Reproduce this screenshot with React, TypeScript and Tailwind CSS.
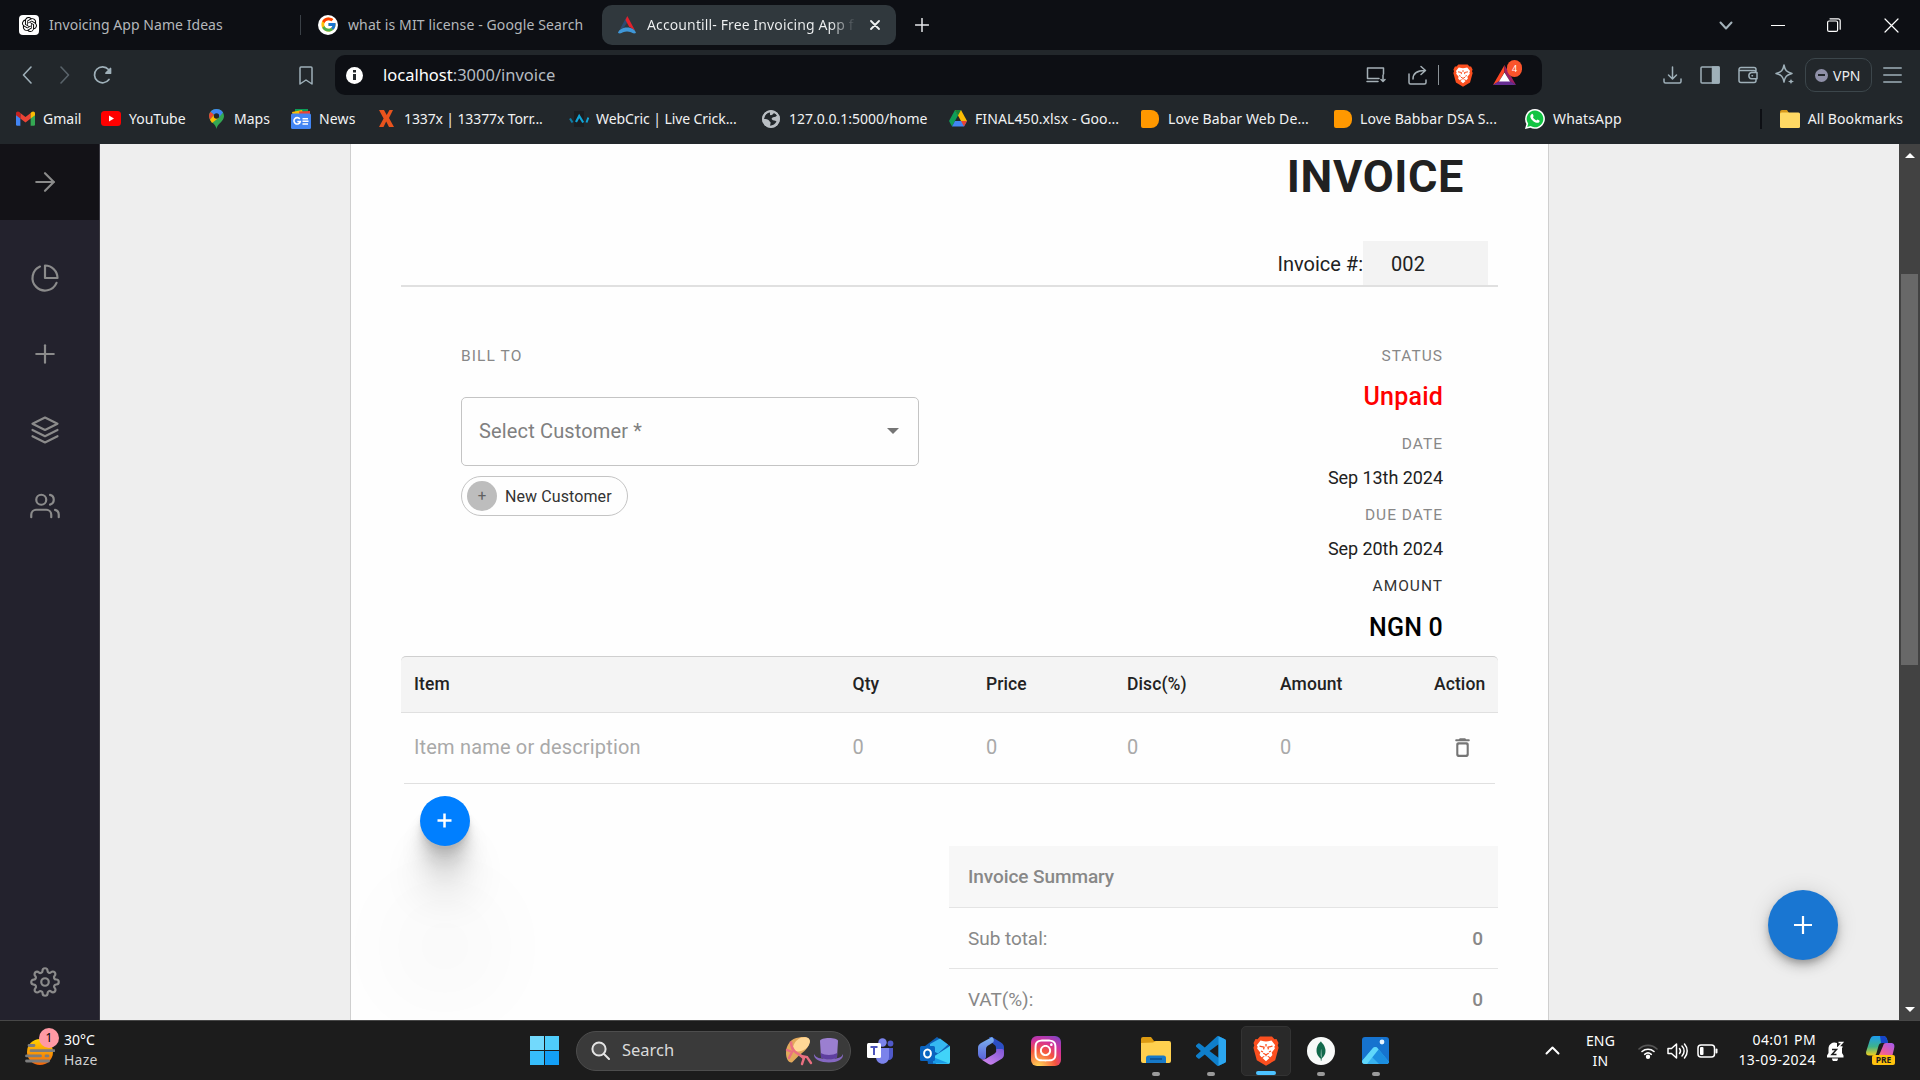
import React from "react";
import { FiArrowRight, FiLayers, FiPieChart, FiPlus, FiSettings, FiUsers } from "react-icons/fi";
import { FcGoogle } from "react-icons/fc";
import { SiMongodb, SiOpenai } from "react-icons/si";
import { FaInstagram } from "react-icons/fa";

function BraveLogo({ w, h }: { w: number; h: number }) {
  return (
    <svg width={w} height={h} viewBox="0 0 26 30">
      <path d="M7 .5h12l2.500 2.800 2-.2 2 4-.8 2.200.9 2.400-3.400 12.500L13 29.800 3.800 24.200.4 11.700l.9-2.400-.8-2.200 2-4 2 .2z" fill="#fb4f1f" />
      <path
        d="M13 5.500l2.200-.3 3.300-.6 3.700 4.600-.9 1.600.6 1.800-3.200 4 .7 2.300-2 2.300-2.300-1.300-.8.700 2.200 1.500L13 25.200 9.500 22.100l2.200-1.500-.8-.7-2.300 1.300-2-2.300.7-2.300-3.200-4 .6-1.800-.9-1.600L7.500 4.600l3.300.6z"
        fill="#fff"
      />
      <path
        d="M6.500 10.200l4.600.9-.5 2.200M19.500 10.200l-4.600.9.500 2.200M10.300 17.200L13 18.700l2.700-1.500M13 8v2.500M13 18.700v1.600M8 15l2 1M18 15l-2 1"
        stroke="#fb4f1f"
        strokeWidth="1.300"
        fill="none"
        strokeLinejoin="round"
      />
    </svg>
  );
}

function GmailIcon() {
  return (
    <svg width="19" height="15" viewBox="0 0 24 18">
      <path d="M0 2.500V16.500A1.500 1.500 0 0 0 1.500 18H5.500V6z" fill="#4285f4" />
      <path d="M24 2.500V16.500A1.500 1.500 0 0 1 22.500 18H18.500V6z" fill="#34a853" />
      <path d="M5.500 2.200L12 7l6.500-4.800V9L12 14 5.500 9z" fill="#ea4335" />
      <path d="M0 2.500C0 .2 2.500-.7 4.300.8L5.500 2v7L0 5z" fill="#c5221f" />
      <path d="M24 2.500C24 .2 21.500-.7 19.700.8L18.500 2v7L24 5z" fill="#fbbc04" />
    </svg>
  );
}
function YoutubeIcon() {
  return (
    <svg width="20" height="15" viewBox="0 0 20 15">
      <rect width="20" height="15" rx="3.500" fill="#f00" />
      <path d="M8 4.500v6l5-3z" fill="#fff" />
    </svg>
  );
}
function MapsIcon() {
  return (
    <svg width="15" height="20" viewBox="0 0 15 20">
      <path d="M7.500 20C7 15 0 12.500 0 7.300 0 3 3.300 0 7.500 0S15 3 15 7.300C15 12.500 8 15 7.500 20z" fill="#34a853" />
      <path d="M1.700 2.800L5.200 5.700 1 10.700C-.4 8 -.4 5.200 1.700 2.800z" fill="#ea4335" />
      <path d="M1.700 2.800C4-.5 10.500-1.300 14 3.500L9.600 8.800 5.200 5.700z" fill="#4285f4" />
      <path d="M9.500 9L3 14 1 10.700l4.200-5z" fill="#fbbc04" />
      <circle cx="7.500" cy="7" r="2.700" fill="#22272b" />
    </svg>
  );
}
function NewsIcon() {
  return (
    <svg width="20" height="20" viewBox="0 0 20 20">
      <path d="M4 0h13v8H4z" fill="#0c9d58" />
      <path d="M1 3l10-2 2 6H2z" fill="#fbbc04" />
      <path d="M8 2.500l11-.5v6H9z" fill="#ea4335" />
      <rect y="4.500" width="20" height="15.500" rx="1.500" fill="#4285f4" />
      <path d="M8.800 10A3.200 3.200 0 1 0 9.300 12.500H6.300M11.500 9.700H17M11.500 12.300h6M11.500 15H17" stroke="#fff" strokeWidth="1.600" fill="none" />
    </svg>
  );
}
function TorrentIcon() {
  return (
    <svg width="15" height="17" viewBox="0 0 15 17">
      <path d="M0 0h5l2.700 5L10.500 0H14l-4 8 5 9h-5l-2.800-5.500L4.500 17H0l4.600-8.500z" fill="#e8531d" />
    </svg>
  );
}
function WebCricIcon() {
  return (
    <svg width="20" height="18" viewBox="0 0 20 18">
      <path d="M5 1h10v16H5z" fill="#1b1d20" />
      <path d="M1 8.500l2.500 4" stroke="#0f7fa8" strokeWidth="2" fill="none" />
      <path d="M7 12L10.200 6l4 6.500" stroke="#10a5d8" strokeWidth="2.200" fill="none" />
      <path d="M17.500 12.500L19.300 7.500" stroke="#10a5d8" strokeWidth="2" fill="none" />
    </svg>
  );
}
function GlobeIcon() {
  return (
    <svg width="18" height="18" viewBox="0 0 18 18">
      <circle cx="9" cy="9" r="9" fill="#b9bec3" />
      <path
        d="M8 2.300C5 3 2.300 5.500 2 9c2 0 4 0 5 1.500s2 1.500 1.500 3L8 15.800c3-.3 5.500-2 6.500-4.300-1.500-1.500-3.500-.5-4.500-2s1-2.500 2.500-2.500 1.500-1 2.500-1.500c-1-1.500-2-2-3-2.500-1 1.500-2.500 2.500-4 2z"
        fill="#22272b"
      />
      <circle cx="9" cy="9" r="7.900" fill="none" stroke="#b9bec3" strokeWidth="1.800" />
    </svg>
  );
}
function DriveIcon() {
  return (
    <svg width="18" height="17" viewBox="0 0 18 17">
      <path d="M6 0h6l6 11h-6z" fill="#fbbc04" />
      <path d="M6 0L0 11l3 5.500L9 5.500z" fill="#0f9d58" />
      <path d="M6 0h6L9 5.500z" fill="#188038" />
      <path d="M6 11h12l-3 5.500H3z" fill="#4285f4" />
      <path d="M12 11h6l-3 5.500z" fill="#ea4335" />
    </svg>
  );
}
function DocIcon() {
  return <span className="block h-[18px] w-[18px] rounded-l-[2px] rounded-r-[8px] bg-[#ff9800]" />;
}
function WhatsAppIcon() {
  return (
    <svg width="20" height="20" viewBox="0 0 20 20">
      <path d="M10 0a10 9.900 0 1 1-4.700 18.700L0 20l1.400-5A10 10 0 0 1 10 0z" fill="#fff" />
      <path d="M10 1.500a8.400 8.400 0 1 1-4.400 15.600L2.200 18l1-3.300A8.400 8.400 0 0 1 10 1.500z" fill="#12c443" />
      <path d="M6.500 5.200c.6-.6 1.300-.3 1.500.3l.6 1.500c.1.500-.7 1-.6 1.300.5 1.200 1.800 2.600 3.300 3.100.4.100.9-1 1.300-.9l1.800.9c.5.300 0 1.600-.5 2-1.200 1-3.600.3-5.300-1C6.900 11.100 5.300 9.300 5.300 7.500c0-1 .6-1.800 1.200-2.300z" fill="#fff" />
    </svg>
  );
}
function FolderIcon() {
  return (
    <svg width="20" height="18" viewBox="0 0 20 18">
      <path d="M0 2a2 2 0 0 1 2-2h5l2 3h9v4H0z" fill="#d99b1c" />
      <rect y="2.500" width="20" height="15.500" rx="1.500" fill="#ffd964" />
    </svg>
  );
}

function AccountillIcon() {
  return (
    <svg width="18" height="18" viewBox="0 0 18 18">
      <path d="M8.500 1L2 13l3.500-1 4-6z" fill="#2b4a73" />
      <path d="M9.300 0L17 14.500 11 10.500 7.500 4z" fill="#e3202b" />
      <path d="M0 17c.500-3 4-5.500 9-5.500s8.500 2.500 9 5.500c-2 1-3.500.3-5-.700-2.500-1-5.500-1-8 0-1.500 1-3 1.700-5 .7z" fill="#3f97d8" />
    </svg>
  );
}

const line = { fill: "none", stroke: "currentColor", strokeLinecap: "round", strokeLinejoin: "round" } as const;

function TabBar() {
  return (
    <div className="flex h-[50px] shrink-0 items-center bg-[#0d0f14] text-[14px] tracking-[0.120px] text-[#b4b7bb]">
      <div className="flex w-[300px] items-center pb-px pl-[19px]">
        <span className="flex h-5 w-5 items-center justify-center rounded-[4px] bg-white text-black">
          <SiOpenai size={15} />
        </span>
        <span className="ml-[10px] tracking-[0.050px] whitespace-nowrap">Invoicing App Name Ideas</span>
      </div>
      <div className="h-5 w-px bg-[#3a4046]" />
      <div className="flex w-[301px] items-center pb-px pl-[17px]">
        <span className="flex h-5 w-5 items-center justify-center rounded-full bg-white">
          <FcGoogle size={17} />
        </span>
        <span className="ml-[10px] whitespace-nowrap">what is MIT license - Google Search</span>
      </div>
      <div className="flex h-10 w-[294px] items-center rounded-[10px] bg-[#30383d] pl-4 text-[#f0f2f3]">
        <AccountillIcon />
        <span className="mb-px ml-[11px] w-[209px] overflow-hidden bg-linear-to-r from-[#f0f2f3] from-88% to-[#30383d] bg-clip-text whitespace-nowrap text-transparent">
          Accountill- Free Invoicing App f
        </span>
        <svg width="10" height="10" viewBox="0 0 10 10" className="ml-[14px]" {...line} strokeWidth="1.800">
          <path d="M1 1l8 8M9 1L1 9" />
        </svg>
      </div>
      <svg width="14" height="14" viewBox="0 0 14 14" className="ml-[19px] text-[#e6e8ea]" {...line} strokeWidth="1.500">
        <path d="M7 .5v13M.5 7h13" />
      </svg>
      <div className="ml-auto flex items-center pr-[21px] text-white">
        <svg width="14" height="9" viewBox="0 0 14 9" className="mr-[38px] text-[#a3b2ba]" {...line} strokeWidth="2">
          <path d="M1.500 1.500L7 7.500l5.500-6" />
        </svg>
        <span className="mr-[42px] h-px w-[14px] bg-white" />
        <svg width="14" height="14" viewBox="0 0 14 14" className="mr-[43px]" {...line} strokeWidth="1.200">
          <rect x=".6" y="3" width="10" height="10.400" rx="1.500" />
          <path d="M3 .8h8.200a2 2 0 0 1 2 2v8.400" />
        </svg>
        <svg width="15" height="15" viewBox="0 0 15 15" {...line} strokeWidth="1.200">
          <path d="M1 1l13 13M14 1L1 14" />
        </svg>
      </div>
    </div>
  );
}

function ToolBar() {
  return (
    <div className="flex h-[50px] shrink-0 items-center bg-[#22272b] text-[#9fb0b9]">
      <svg width="10" height="18" viewBox="0 0 10 18" className="ml-[22px]" {...line} strokeWidth="1.600">
        <path d="M9 1L1.500 9 9 17" />
      </svg>
      <svg width="10" height="18" viewBox="0 0 10 18" className="ml-[28px] text-[#59636a]" {...line} strokeWidth="1.600">
        <path d="M1 1l7.500 8L1 17" />
      </svg>
      <svg width="19" height="20" viewBox="0 0 19 20" className="ml-[23px]" {...line} strokeWidth="1.700">
        <path d="M15.500 4.500A8 8 0 1 0 16 14.500" />
        <path d="M17.500 3.500v4.700h-4.500z" fill="currentColor" />
      </svg>
      <svg width="14" height="19" viewBox="0 0 14 19" className="ml-[187px]" {...line} strokeWidth="1.500">
        <path d="M1 2a1 1 0 0 1 1-1h10a1 1 0 0 1 1 1v16l-6-4-6 4z" />
      </svg>
      <div className="ml-[22px] flex h-10 w-[1207px] items-center rounded-[10px] bg-[#0d0f14] text-[#a5b0b6]">
        <span className="ml-[11px] flex h-[17px] w-[17px] items-center justify-center rounded-full bg-white">
          <svg width="3" height="10" viewBox="0 0 3 10">
            <path d="M0 0h3v2.500H0zM0 4h3v6H0z" fill="#22272b" />
          </svg>
        </span>
        <span className="ml-[20px] text-[16.500px] text-[#b5bbc0]">
          <span className="text-white">localhost</span>:3000/invoice
        </span>
        <svg width="20" height="16" viewBox="0 0 20 16" className="ml-auto" {...line} strokeWidth="1.500">
          <path d="M17.500 7V1H1.500v10.500H13M1 14.500h11M17 8v6M15 12.500l2 2 2-2" />
        </svg>
        <svg width="20" height="20" viewBox="0 0 20 20" className="ml-[22px]" {...line} strokeWidth="1.500">
          <path d="M1 9v8.500A1.500 1.500 0 0 0 2.500 19h14a1.500 1.500 0 0 0 1.500-1.500V15M5 14c0-5 3.500-8.500 12-8.500M13 1.500l4.500 4-4.500 4" />
        </svg>
        <span className="ml-[10px] h-5 w-px bg-[#8b9297]" />
        <span className="ml-[14px]">
          <BraveLogo w={20} h={23} />
        </span>
        <span className="relative mr-[26px] ml-[20px]">
          <svg width="23" height="20" viewBox="0 0 23 20">
            <path d="M11.500 0L0 20l6-3.500 5.500-9.500z" fill="#ff4724" />
            <path d="M11.500 0L23 20l-6-3.500L11.500 7z" fill="#9e1f63" />
            <path d="M0 20h23l-6-4H6z" fill="#662d91" />
            <path d="M11.500 7.500L6 16.500h11z" fill="#fff" />
          </svg>
          <span className="absolute -top-[5px] left-[14px] flex h-[17px] w-[15px] items-center justify-center rounded-full bg-[#fb542b] text-[9px] text-white">
            4
          </span>
        </span>
      </div>
      <svg width="19" height="18" viewBox="0 0 19 18" className="ml-[121px]" {...line} strokeWidth="1.500">
        <path d="M9.500 1v11.500M5.500 9l4 4 4-4M1 13v2.500A1.500 1.500 0 0 0 2.500 17h14a1.500 1.500 0 0 0 1.500-1.500V13" />
      </svg>
      <svg width="20" height="18" viewBox="0 0 20 18" className="ml-[18px]" {...line} strokeWidth="1.500">
        <rect x="1" y="1" width="18" height="16" rx="1" />
        <path d="M12.500 1H19v16h-6.500z" fill="currentColor" />
      </svg>
      <svg width="20" height="18" viewBox="0 0 20 18" className="ml-[18px]" {...line} strokeWidth="1.500">
        <path d="M18 5V3.500a2 2 0 0 0-2-2H3a2 2 0 0 0-2 2v11a2 2 0 0 0 2 2h13a2 2 0 0 0 2-2V13M1.500 4.500H16a2 2 0 0 1 2 2M19 6.500h-5.500a3.200 3.200 0 0 0 0 6.300H19zM14 9.700h.5" />
      </svg>
      <svg width="20" height="22" viewBox="0 0 20 22" className="ml-[17px]" {...line} strokeWidth="1.500">
        <path d="M9 1c1 5.500 2.500 7 8 8.500-5.500 1.500-7 3-8 8.500-1-5.500-2.500-7-8-8.500C6.500 8 8 6.500 9 1z" />
        <path d="M16 14.500c.4 2 .9 2.500 3 3-2.100.5-2.600 1-3 3-.4-2-.9-2.500-3-3 2.100-.5 2.600-1 3-3z" fill="currentColor" stroke="none" />
      </svg>
      <span className="ml-[10px] flex h-[34px] w-[67px] items-center rounded-[10px] border border-[#3c464b] pl-[9px] text-[14px] text-[#eceeef]">
        <span className="flex h-[13px] w-[13px] items-center justify-center rounded-full bg-[#8f90a8]">
          <span className="h-[2px] w-[7px] bg-[#22272b]" />
        </span>
        <span className="ml-[5px]">VPN</span>
      </span>
      <svg width="19" height="16" viewBox="0 0 19 16" className="ml-[11px]" {...line} strokeWidth="1.500">
        <path d="M.8 1h17.400M.8 8h17.400M.8 15h17.400" />
      </svg>
    </div>
  );
}

const bookmarks: { w: string; iw: string; icon: React.ReactNode; label: string; t?: string }[] = [
  { w: "w-[85px]", iw: "w-[27px]", icon: <GmailIcon />, label: "Gmail" },
  { w: "w-[108px]", iw: "w-[28px]", icon: <YoutubeIcon />, label: "YouTube" },
  { w: "w-[82px]", iw: "w-[25px]", icon: <MapsIcon />, label: "Maps" },
  { w: "w-[88px]", iw: "w-[28px]", icon: <NewsIcon />, label: "News", t: "tracking-[0.150px]" },
  { w: "w-[190px]", iw: "w-[25px]", icon: <TorrentIcon />, label: "1337x | 13377x Torr...", t: "tracking-[-0.120px]" },
  { w: "w-[193px]", iw: "w-[27px]", icon: <WebCricIcon />, label: "WebCric | Live Crick...", t: "tracking-[-0.080px]" },
  { w: "w-[187px]", iw: "w-[27px]", icon: <GlobeIcon />, label: "127.0.0.1:5000/home" },
  { w: "w-[192px]", iw: "w-[26px]", icon: <DriveIcon />, label: "FINAL450.xlsx - Goo...", t: "tracking-[0.100px]" },
  { w: "w-[193px]", iw: "w-[27px]", icon: <DocIcon />, label: "Love Babar Web De...", t: "tracking-[0.080px]" },
  { w: "w-[191px]", iw: "w-[26px]", icon: <DocIcon />, label: "Love Babbar DSA S...", t: "tracking-[0.100px]" },
  { w: "w-[120px]", iw: "w-[28px]", icon: <WhatsAppIcon />, label: "WhatsApp", t: "tracking-[0.150px]" },
];

function BookmarksBar() {
  return (
    <div className="flex h-[44px] shrink-0 items-center bg-[#22272b] pb-[7px] pl-[16px] text-[14px] text-[#f1f2f3]">
      {bookmarks.map((b) => (
        <span key={b.label} className={`flex shrink-0 items-center whitespace-nowrap ${b.w} ${b.t ?? ""}`}>
          <span className={`shrink-0 ${b.iw}`}>{b.icon}</span>
          <span className="-mt-px">{b.label}</span>
        </span>
      ))}
      <span className="ml-auto h-5 w-[2px] bg-[#0d0f14]" />
      <span className="ml-[18px] flex items-center pr-[17px] whitespace-nowrap">
        <span className="mr-[8px]">
          <FolderIcon />
        </span>
        <span className="-mt-px tracking-[0.080px]">All Bookmarks</span>
      </span>
    </div>
  );
}

function Sidebar() {
  const items = [FiPieChart, FiPlus, FiLayers, FiUsers];
  return (
    <div className="flex w-[100px] shrink-0 flex-col border-r border-[#3a3941] bg-[#23222d] text-[#8b8b8b]">
      <div className="flex h-[76px] items-center bg-[#131217] pl-[30px]">
        <FiArrowRight size={30} strokeWidth={1.75} />
      </div>
      <div className="mt-[20px] flex flex-col">
        {items.map((Icon, i) => (
          <div key={i} className="flex h-[76px] items-center pl-[30px]">
            <Icon size={30} strokeWidth={1.75} />
          </div>
        ))}
      </div>
      <div className="mt-auto mb-[23px] pl-[30px]">
        <FiSettings size={30} strokeWidth={1.75} />
      </div>
    </div>
  );
}

function InvoicePaper() {
  return (
    <div className="relative ml-[250px] h-full w-[1199px] border-x border-[#cfcfcf] bg-[#fefefe] px-[50px] text-[#212121]">
      <div className="flex h-[64px] items-center justify-end pt-[2px] pr-[34px] text-[45px] font-bold tracking-[0.600px]">INVOICE</div>
      <div className="mt-[33px] flex h-[46px] items-stretch justify-end border-b-2 border-[#e0e0e0] pr-[10px] text-[20px]">
        <span className="flex items-center pt-[2px]">Invoice #:</span>
        <span className="flex w-[125px] items-center bg-[#f3f3f3] pt-[2px] pl-[28px] tracking-[0.100px]">002</span>
      </div>
      <div className="flex h-[369px] justify-between pt-[59px] pr-[55px] pl-[60px]">
        <div className="w-[458px]">
          <div className="h-5 text-[15.500px] leading-5 tracking-[1.100px] text-[#888]">BILL TO</div>
          <div className="mt-[31px] flex h-[69px] items-center justify-between rounded-[5px] border border-[#c4c4c4] pr-[19px] pb-px pl-[17px] text-[20px] tracking-[0.150px] text-[#808080]">
            Select Customer *
            <span className="h-0 w-0 border-x-[6px] border-t-[6px] border-x-transparent border-t-[#757575]" />
          </div>
          <div className="mt-[10px] flex h-10 w-[167px] items-center rounded-full border border-[#c4c4c4] pl-[5px] text-[16px] tracking-[0.100px]">
            <span className="mr-[8px] flex h-[30px] w-[30px] items-center justify-center rounded-full bg-[#bdbdbd] text-[15px] text-[#616161]">
              +
            </span>
            <span className="pt-px text-[#333]">New Customer</span>
          </div>
        </div>
        <div className="text-right">
          <div className="h-5 text-[15.500px] leading-5 tracking-[1px] text-[#888]">STATUS</div>
          <div className="h-[60px] pt-px text-[25px] leading-[60px] font-medium tracking-[0.200px] text-[#f00]">Unpaid</div>
          <div className="h-[35px] pt-px text-[15.500px] leading-[35px] tracking-[1px] text-[#888]">DATE</div>
          <div className="h-[33px] text-[18px] leading-[33px] tracking-[-0.050px]">Sep 13th 2024</div>
          <div className="h-[41px] pt-px text-[15.500px] leading-[41px] tracking-[1px] text-[#888]">DUE DATE</div>
          <div className="h-[28px] text-[18px] leading-[28px] tracking-[-0.050px]">Sep 20th 2024</div>
          <div className="h-[45px] pt-px text-[15.500px] leading-[45px] tracking-[1px] text-[#333]">AMOUNT</div>
          <div className="h-[38px] pt-px text-[25px] leading-[38px] font-medium tracking-[0.200px] text-black">NGN 0</div>
        </div>
      </div>

      <div className="grid h-[57px] grid-cols-[438.5px_133.500px_141px_153px_154px_77px] items-center rounded-t-[5px] border-t border-b border-t-[#cfcfcf] border-b-[#e0e0e0] bg-[#f4f4f4] pb-px text-[17.500px] font-medium tracking-[0.100px] text-[#222]">
        {["Item", "Qty", "Price", "Disc(%)", "Amount", "Action"].map((c) => (
          <span key={c} className="pl-[13px]">
            {c}
          </span>
        ))}
      </div>
      <div className="mx-[3px] grid h-[71px] grid-cols-[435.5px_133.500px_141px_153px_154px_74px] items-center border-b border-[#e0e0e0] pb-[2px] text-[20px] tracking-[0.170px] text-[#a9a9a9]">
        <span className="pl-[10px]">Item name or description</span>
        {[0, 1, 2, 3].map((i) => (
          <span key={i} className="pl-[13px]">
            0
          </span>
        ))}
        <svg width="25" height="25" viewBox="0 0 24 24" fill="#757575" className="ml-[29px]">
          <path d="M6 19c0 1.100.9 2 2 2h8c1.100 0 2-.9 2-2V9c0-1.100-.9-2-2-2H8c-1.100 0-2 .9-2 2v10zM9 9h6c.55 0 1 .45 1 1v8c0 .55-.45 1-1 1H9c-.55 0-1-.45-1-1v-8c0-.55.45-1 1-1zm6.500-5l-.71-.71c-.18-.18-.44-.29-.7-.29H9.910c-.26 0-.52.11-.7.29L8.500 4H6c-.55 0-1 .45-1 1s.45 1 1 1h12c.55 0 1-.45 1-1s-.45-1-1-1h-2.500z" />
        </svg>
      </div>
      <div className="mt-[12px] ml-[19px] flex h-[50px] w-[50px] items-center justify-center rounded-full bg-[#007fff] pr-px pb-px text-white shadow-[0_3.5px_2.75px_rgba(0,0,0,0.05),0_8.4px_6.6px_rgba(0,0,0,0.07),0_15.6px_12.5px_rgba(0,0,0,0.09),0_28px_22.4px_rgba(0,0,0,0.1),0_52px_42px_rgba(0,0,0,0.1),0_125px_100px_rgba(0,0,0,0.14)]">
        <svg width="15" height="15" viewBox="0 0 15 15" stroke="currentColor" strokeWidth="2.500">
          <path d="M7.500 .5v14M.5 7.500h14" />
        </svg>
      </div>
      <div className="ml-auto w-[549px] text-[19px] text-[#888]">
        <div className="flex h-[62px] items-center border-b border-[#e4e4e4] bg-[#f7f7f7] pt-[2px] pl-[19px] font-medium tracking-[-0.080px]">
          Invoice Summary
        </div>
        {["Sub total:", "VAT(%):"].map((r) => (
          <div key={r} className="flex h-[61px] items-center justify-between border-b border-[#e4e4e4] pt-[3px] pr-[15px] pl-[19px] tracking-[-0.050px]">
            <span>{r}</span>
            <span className="font-medium">0</span>
          </div>
        ))}
      </div>
    </div>
  );
}

function Hats() {
  return (
    <svg width="60" height="30" viewBox="0 0 60 30">
      <path d="M2 17C2 9 7 2 15 1.500c8-1.500 12 1 10 6-2 7-7 9-11 13l-6 6C4 27 2 22 2 17z" fill="#e2a95c" />
      <path d="M9 11C11 3 18 0 23 1.500s3 8-1 11-9 4-11 2z" fill="#ffd796" />
      <path d="M7 5.500c0 5 2 9 5 11s6 3 8 6" stroke="#ea6f80" strokeWidth="2.600" fill="none" />
      <path d="M3 14l5 2-3 6M17 20l6 1 4 6M20 22l-2 6" stroke="#ea6f80" strokeWidth="2.400" fill="none" strokeLinecap="round" />
      <path d="M36 5c0-4 18-4 18 0l-1 16c-3 3-13 3-16 0z" fill="#9b7fd0" />
      <path d="M36.800 17c4 2.500 12 2.500 16.500 0l-.3 4.500c-4 2.500-12 2.500-16 0z" fill="#5f3f9f" />
      <path d="M30 18c2 4 5 4 8 4.500 4 1 10 1 14 0 3-.5 6-1.500 7-4.500 1 5-6 8.500-14 8.500S29 23 30 18z" fill="#8568c2" />
    </svg>
  );
}
function TeamsIcon() {
  return (
    <svg width="27" height="26" viewBox="0 0 27 26">
      <circle cx="15.500" cy="4.500" r="4.200" fill="#7b83eb" />
      <circle cx="23.500" cy="5.500" r="2.900" fill="#5059c9" />
      <path d="M17 10h9v7c0 6-6 6-8 3z" fill="#5059c9" />
      <path d="M9 10h13v9c0 9-13 9-13 0z" fill="#7b83eb" />
      <rect y="5" width="14" height="15" rx="1.500" fill="#fff" />
      <path d="M3.500 9h7M7 9v8" stroke="#4b53bc" strokeWidth="2" />
    </svg>
  );
}
function OutlookIcon() {
  return (
    <svg width="31" height="27" viewBox="0 0 31 27">
      <path d="M5 9L17 0l13 9v16a2 2 0 0 1-2 2H8z" fill="#0f5fb5" />
      <path d="M10 7L20 1.500l8 6-10 9-8-4z" fill="#35b8f1" />
      <path d="M30 9L13 20l3 7h12a2 2 0 0 0 2-2z" fill="#41d3f8" />
      <path d="M13 20l16 6.500H13z" fill="#1a9be8" />
      <rect y="9" width="15" height="15" rx="1.500" fill="#0a64c0" />
      <ellipse cx="7.500" cy="16.500" rx="3.400" ry="4" stroke="#fff" strokeWidth="2" fill="none" />
    </svg>
  );
}
function M365Icon() {
  return (
    <svg width="28" height="28" viewBox="0 0 28 28">
      <defs>
        <linearGradient id="m1" x1="0" y1="0" x2="0" y2="1">
          <stop offset="0" stopColor="#7db4f0" />
          <stop offset="1" stopColor="#5a62d8" />
        </linearGradient>
        <linearGradient id="m2" x1="0" y1="1" x2="1" y2="0">
          <stop offset="0" stopColor="#d98bf0" />
          <stop offset="1" stopColor="#7c56d6" />
        </linearGradient>
      </defs>
      <path d="M12 0h3l9 5.500c2.500 1.500 3 3 3 5.500v6l-8-3V11c0-2-1-3-3-4.200z" fill="#2c4fc4" />
      <path d="M15 0L5 5.500C2.500 7 1 8 1 11v6c0 3 2 5 5 5.500 2 .3 3-1 3-3V12c0-2 1-3 3-4l4-2.500C17.500 4 17 1.500 15 0z" fill="url(#m1)" />
      <path d="M27 14v3c0 3-1 4-3.500 5.500L16 27c-1.500.9-3 .9-4.500 0L4 22.200c3 .8 5-.2 7-1.700l6-3.500c2-1.200 2.500-2.500 2.500-5C24 12 27 11.500 27 14z" fill="url(#m2)" />
    </svg>
  );
}
function ExplorerIcon() {
  return (
    <svg width="30" height="27" viewBox="0 0 30 27">
      <path d="M0 2a2 2 0 0 1 2-2h8l3 4h15v6H0z" fill="#dd9b12" />
      <path d="M0 6l12-.5 3-1.500h13a2 2 0 0 1 2 2v18a2 2 0 0 1-2 2H2a2 2 0 0 1-2-2z" fill="#ffd04f" />
      <path d="M5 26v-5a2.500 2.500 0 0 1 2.500-2.500h15A2.500 2.500 0 0 1 25 21v5z" fill="#1779c8" />
      <path d="M9 22h12" stroke="#0c4f8f" strokeWidth="1.600" />
    </svg>
  );
}
function VsCodeIcon() {
  return (
    <svg width="30" height="30" viewBox="0 0 24 24">
      <path
        d="M23.150 2.587L18.210.21a1.494 1.494 0 0 0-1.705.29l-9.460 8.630-4.120-3.128a.999.999 0 0 0-1.276.057L.327 7.261A1 1 0 0 0 .326 8.740L3.899 12 .326 15.260a1 1 0 0 0 .001 1.479L1.650 17.940a.999.999 0 0 0 1.276.057l4.120-3.128 9.460 8.630a1.492 1.492 0 0 0 1.704.29l4.942-2.377A1.500 1.500 0 0 0 24 20.060V3.939a1.500 1.500 0 0 0-.85-1.352zm-5.146 14.861L10.826 12l7.178-5.448v10.896z"
        fill="#0f7fcb"
      />
      <path d="M18 .2l5.150 2.387c.5.250.85.750.85 1.352V20.060c0 .600-.35 1.100-.85 1.352L18 23.800z" fill="#2ba6f0" />
    </svg>
  );
}
function PhotosIcon() {
  return (
    <svg width="27" height="27" viewBox="0 0 27 27">
      <rect width="27" height="27" rx="3" fill="#1673cf" />
      <path d="M0 24L11 11a3 3 0 0 1 4.500 0L27 25a3 3 0 0 1-3 2H3a3 3 0 0 1-3-3z" fill="#38b2f0" />
      <path d="M15.500 11L27 25a3 3 0 0 1-3 2h-7L9 19z" fill="#1c8fe0" />
      <path d="M0 24L11 11a3 3 0 0 1 4.500 0l1 1.400L5 27H3a3 3 0 0 1-3-3z" fill="#5fd7fb" />
      <circle cx="20" cy="5" r="2.400" fill="#e8f4ff" />
    </svg>
  );
}
function CopilotIcon() {
  return (
    <svg width="29" height="29" viewBox="0 0 29 29">
      <defs>
        <linearGradient id="c1" x1="0" y1="0" x2="0" y2="1">
          <stop offset="0" stopColor="#1c9df0" />
          <stop offset=".55" stopColor="#3fb28a" />
          <stop offset="1" stopColor="#f3cf1c" />
        </linearGradient>
        <linearGradient id="c2" x1="1" y1="0" x2="0" y2="1">
          <stop offset="0" stopColor="#a15bf2" />
          <stop offset=".6" stopColor="#ee5c9a" />
          <stop offset="1" stopColor="#ff9b50" />
        </linearGradient>
      </defs>
      <path d="M8 0h9c3 0 4 2 5 7h-6c-2 0-3 1-3.500 3l-2 7c-.500 2-1.500 2.500-3.500 2.500H3c-3 0-3.500-2.500-2.500-5L4 3.500C5 1 6 0 8 0z" fill="url(#c1)" />
      <path d="M14 0h4c2 0 3 2 4 7h-7z" fill="#1646c9" />
      <path d="M20 7h5c3 0 4 2 3 6l-2 8H8c2 0 5-1 6-4l3-7c.600-2 1-3 3-3z" fill="url(#c2)" />
      <rect x="6" y="19" width="23" height="10" rx="2" fill="#ffc20e" />
      <text x="17.500" y="27" textAnchor="middle" fontSize="8.500" fontWeight="700" fontFamily="Noto Sans, sans-serif" fill="#1c1c1c">
        PRE
      </text>
    </svg>
  );
}

const apps: { icon: React.ReactNode; mark: "none" | "dot" | "active" }[] = [
  { icon: <TeamsIcon />, mark: "none" },
  { icon: <OutlookIcon />, mark: "none" },
  { icon: <M365Icon />, mark: "none" },
  {
    icon: (
      <span className="flex h-[30px] w-[30px] items-center justify-center rounded-[6px] bg-[radial-gradient(circle_at_25%_105%,#ffd054_5%,#f5553f_45%,#d3319c_70%,#6a4bd0_100%)] text-white">
        <FaInstagram size={25} />
      </span>
    ),
    mark: "none",
  },
  { icon: null, mark: "none" },
  { icon: <ExplorerIcon />, mark: "dot" },
  { icon: <VsCodeIcon />, mark: "dot" },
  { icon: <BraveLogo w={26} h={30} />, mark: "active" },
  {
    icon: (
      <span className="flex h-7 w-7 items-center justify-center rounded-full bg-[#f8faf9] text-[#12694b]">
        <SiMongodb size={20} />
      </span>
    ),
    mark: "dot",
  },
  { icon: <PhotosIcon />, mark: "dot" },
];

function Taskbar() {
  return (
    <div className="flex h-[60px] shrink-0 border-t border-[#474747] bg-[#1c1c1c] text-white">
      <div className="flex w-[530px] items-center pl-[25px]">
        <div className="relative mt-[2px] h-[30px] w-[30px]">
          <svg width="30" height="30" viewBox="0 0 30 30">
            <defs>
              <linearGradient id="sun" x1="0" y1="0" x2="0" y2="1">
                <stop offset="0" stopColor="#ffd400" />
                <stop offset="1" stopColor="#f2640c" />
              </linearGradient>
            </defs>
            <circle cx="15" cy="15" r="13" fill="url(#sun)" />
            <path d="M4 8.500h5M6 13.700h23M1.500 18.900h14M21 18.900h2M1.500 24h22" stroke="#7d7d7d" strokeWidth="2.800" strokeLinecap="round" />
          </svg>
          <span className="absolute -top-[9px] left-[14px] flex h-5 w-5 items-center justify-center rounded-full bg-[#ff99a4] text-[12px] text-black">
            1
          </span>
        </div>
        <div className="-mt-[2px] ml-[9px] text-[14px] leading-[20px]">
          <div>30°C</div>
          <div className="tracking-[0.200px] text-[#d0d0d0]">Haze</div>
        </div>
      </div>
      <div className="flex items-center">
        <div className="grid grid-cols-2 gap-px">
          <span className="h-[14px] w-[14px] bg-[#72d9fc]" />
          <span className="h-[14px] w-[14px] bg-[#4fcdfb]" />
          <span className="h-[14px] w-[14px] bg-[#37bdfa]" />
          <span className="h-[14px] w-[14px] bg-[#139ff6]" />
        </div>
        <div className="ml-[17px] flex h-10 w-[275px] items-center rounded-full border border-[#4d4d4d] bg-[#3a3a3a] pl-[14px]">
          <svg width="19" height="19" viewBox="0 0 19 19" stroke="#e4e4e4" strokeWidth="2" fill="#555" strokeLinecap="round">
            <circle cx="8" cy="8" r="6.600" />
            <path d="M13 13l5 5" />
          </svg>
          <span className="ml-[12px] text-[16.500px] text-[#dadada]">Search</span>
          <span className="mr-[6px] ml-auto">
            <Hats />
          </span>
        </div>
      </div>
      <div className="ml-[2px] flex items-center">
        {apps.map((a, i) => (
          <div key={i} className="flex h-[59px] w-[55px] items-center justify-center">
            <div
              className={`relative flex h-[50px] w-[50px] items-center justify-center ${
                a.mark === "active" ? "rounded-[5px] border border-[#333] bg-[#292929]" : ""
              }`}
            >
              {a.icon}
              {a.mark === "dot" && <span className="absolute bottom-0 left-[21px] h-[4px] w-[8px] rounded-full bg-[#9a9a9a]" />}
              {a.mark === "active" && <span className="absolute bottom-0 left-[14px] h-[4px] w-[20px] rounded-full bg-[#4cc2ff]" />}
            </div>
          </div>
        ))}
      </div>
      <div className="ml-auto flex items-center pr-[25px] text-[14px] leading-[20px]">
        <svg width="15" height="9" viewBox="0 0 15 9" {...line} strokeWidth="2">
          <path d="M1.500 7.500l6-6 6 6" />
        </svg>
        <div className="ml-[25px] w-[31px] text-center tracking-[0.200px]">
          <div>ENG</div>
          <div>IN</div>
        </div>
        <svg width="20" height="16" viewBox="0 0 20 16" className="ml-[22px]" {...line} strokeWidth="1.600">
          <path d="M1 6a13 13 0 0 1 18 0" stroke="#555" />
          <path d="M4 8.500a9 9 0 0 1 12 0M6.700 11.300a5 5 0 0 1 6.600 0" />
          <circle cx="10" cy="13.700" r="1.400" fill="currentColor" />
        </svg>
        <svg width="21" height="18" viewBox="0 0 21 18" className="ml-[9px]" {...line} strokeWidth="1.500">
          <path d="M1 6.500h3.500L9.500 2v14l-5-4.500H1zM12.500 6.500a4 4 0 0 1 0 5M15 4a7 7 0 0 1 0 10M17.500 2a10.500 10.500 0 0 1 0 14" />
        </svg>
        <svg width="21" height="14" viewBox="0 0 21 14" className="ml-[9px]" {...line} strokeWidth="1.500">
          <rect x="1" y="1" width="16.500" height="12" rx="3" />
          <rect x="3" y="3" width="3.500" height="8" rx="1" fill="currentColor" stroke="none" />
          <path d="M19.500 5.500v3" strokeWidth="2" />
        </svg>
        <div className="-mt-[2px] ml-[20px] w-[78px] text-right whitespace-nowrap">
          <div className="tracking-[0.350px]">04:01 PM</div>
          <div className="tracking-[0.450px]">13-09-2024</div>
        </div>
        <svg width="19" height="20" viewBox="0 0 19 20" className="ml-[10px]">
          <path d="M1 16.500v-2l1.500-2.500V7.500A6 6 0 0 1 11 2v4h5v6l1.500 2.500v2zM6 17.500h6a3 3 0 0 1-6 0z" fill="#fff" />
          <path d="M6 8.500h4.500L6 13.500h4.500" stroke="#1c1c1c" strokeWidth="1.500" fill="none" />
          <path d="M12.500 1.500h4l-4 4.500h4" stroke="#fff" strokeWidth="1.500" fill="none" />
        </svg>
        <span className="ml-[21px]">
          <CopilotIcon />
        </span>
      </div>
    </div>
  );
}

export default function App() {
  return (
    <div className="flex h-[1080px] w-[1920px] flex-col overflow-hidden font-['Noto_Sans',sans-serif]">
      <TabBar />
      <ToolBar />
      <BookmarksBar />
      <div className="flex h-[876px] shrink-0 overflow-hidden font-[Roboto,sans-serif]">
        <Sidebar />
        <div className="relative flex-1 overflow-hidden bg-[#eee]">
          <InvoicePaper />
          <div className="absolute right-[61px] bottom-[60px] flex h-[70px] w-[70px] items-center justify-center rounded-full bg-[#1976d2] text-white shadow-[0_4px_6px_-1px_rgba(0,0,0,0.2),0_7px_12px_rgba(0,0,0,0.14),0_1px_22px_rgba(0,0,0,0.12)]">
            <svg width="18" height="18" viewBox="0 0 18 18" stroke="currentColor" strokeWidth="2.200">
              <path d="M9 0v18M0 9h18" />
            </svg>
          </div>
        </div>
        <div className="flex w-[21px] flex-col items-center bg-[#424242]">
          <span className="mt-[9px] h-0 w-0 border-x-[5px] border-b-[5px] border-x-transparent border-b-white" />
          <span className="mt-[116px] h-[391px] w-[17px] bg-[#686868]" />
          <span className="mt-auto mb-[8px] h-0 w-0 border-x-[5px] border-t-[5px] border-x-transparent border-t-white" />
        </div>
      </div>
      <Taskbar />
    </div>
  );
}
